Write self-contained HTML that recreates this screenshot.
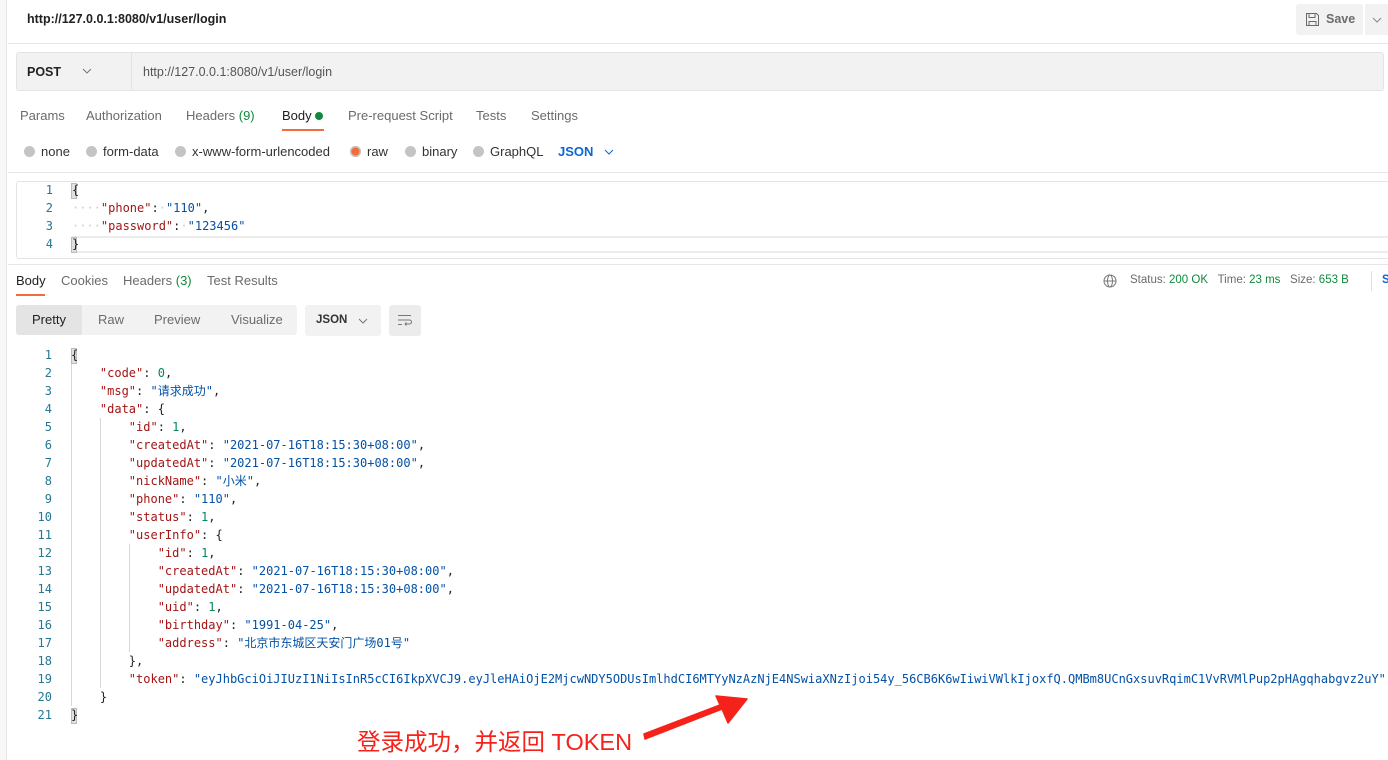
<!DOCTYPE html>
<html><head><meta charset="utf-8"><style>
*{margin:0;padding:0;box-sizing:border-box}
body{width:1388px;height:760px;overflow:hidden;background:#fff;position:relative;font-family:"Liberation Sans","Noto Sans CJK SC",sans-serif;font-size:12px;color:#6b6b6b}
.a{position:absolute;white-space:nowrap}
.strip{position:absolute;left:0;top:0;width:7px;height:760px;background:#f7f7f7;border-right:1px solid #e6e6e6}
.hr{position:absolute;left:8px;right:0;height:1px;background:#e6e6e6}
.code{font-family:"DejaVu Sans Mono","Noto Sans CJK SC",monospace;font-size:12px;line-height:18px}
.ln{position:absolute;width:40px;text-align:right;color:#237893;font-family:"DejaVu Sans Mono",monospace;font-size:12px;line-height:18px}
.k{color:#a31515}.s{color:#0451a5}.n{color:#098658}.p{color:#222}
.rad{display:inline-block;width:11px;height:11px;border-radius:50%;background:#c4c4c4;vertical-align:-1px;margin-right:6px}
.g{color:#0f8a3c}
.guide{position:absolute;width:1px;background:#d8d8d8}
.t{font-size:13px}
</style></head><body>
<div class="strip"></div>
<div class="a" style="left:27px;top:12px;font-size:12.5px;color:#212121;font-weight:bold">http://127.0.0.1:8080/v1/user/login</div>
<div class="a" style="left:1296px;top:4px;width:67px;height:31px;background:#f2f2f2;border-radius:3px"></div>
<svg class="a" style="left:1305px;top:12px" width="15" height="15" viewBox="0 0 15 15" fill="none" stroke="#6b6b6b" stroke-width="1"><path d="M1.5 1.5h10l2 2v10h-12z M4 1.5v4h6v-4 M4 13.5v-4h7v4"/></svg>
<div class="a" style="left:1326px;top:12px;font-weight:bold;color:#6b6b6b;font-size:12.5px">Save</div>
<div class="a" style="left:1365px;top:4px;width:23px;height:31px;background:#f2f2f2"></div>
<svg class="a" style="left:1372px;top:17px" width="10" height="6"><path d="M1 1l4 4 4-4" stroke="#888" fill="none"/></svg>
<div class="hr" style="top:43px"></div>

<div class="a" style="left:16px;top:52px;width:1368px;height:39px;background:#f2f2f2;border:1px solid #e4e4e4;border-radius:3px"></div>
<div class="a" style="left:131px;top:53px;width:1px;height:37px;background:#e2e2e2"></div>
<div class="a" style="left:27px;top:65px;font-weight:bold;color:#212121;font-size:12.5px">POST</div>
<svg class="a" style="left:82px;top:68px" width="10" height="6"><path d="M1 1l4 4 4-4" stroke="#777" fill="none"/></svg>
<div class="a" style="left:143px;top:65px;color:#555;font-size:12.5px">http://127.0.0.1:8080/v1/user/login</div>

<div class="a t" style="left:20px;top:108px">Params</div>
<div class="a t" style="left:86px;top:108px">Authorization</div>
<div class="a t" style="left:186px;top:108px">Headers <span class="g">(9)</span></div>
<div class="a t" style="left:282px;top:108px;color:#212121">Body <span style="display:inline-block;width:8px;height:8px;border-radius:50%;background:#0f8a3c;vertical-align:0"></span></div>
<div class="a" style="left:282px;top:129px;width:42px;height:2px;background:#f26b3a"></div>
<div class="a t" style="left:348px;top:108px">Pre-request Script</div>
<div class="a t" style="left:476px;top:108px">Tests</div>
<div class="a t" style="left:531px;top:108px">Settings</div>

<div class="a t" style="left:24px;top:144px;color:#333"><span class="rad"></span>none</div>
<div class="a t" style="left:86px;top:144px;color:#333"><span class="rad"></span>form-data</div>
<div class="a t" style="left:175px;top:144px;color:#333"><span class="rad"></span>x-www-form-urlencoded</div>
<div class="a t" style="left:350px;top:144px;color:#333"><span class="rad" style="background:#f26b3a;box-shadow:0 0 0 1.5px #c4c4c4 inset"></span>raw</div>
<div class="a t" style="left:405px;top:144px;color:#333"><span class="rad"></span>binary</div>
<div class="a t" style="left:473px;top:144px;color:#333"><span class="rad"></span>GraphQL</div>
<div class="a t" style="left:558px;top:144px;color:#0b66d6;font-weight:bold">JSON</div>
<svg class="a" style="left:604px;top:149px" width="10" height="6"><path d="M1 1l4 4 4-4" stroke="#0b66d6" fill="none"/></svg>
<div class="hr" style="top:172px"></div>

<div class="a" style="left:16px;top:181px;width:1380px;height:78px;border:1px solid #e4e4e4;border-radius:3px"></div>
<div class="a" style="left:72px;top:236px;width:1316px;height:17px;border-top:2px solid #ececec;border-bottom:2px solid #ececec"></div>
<div class="ln" style="left:13px;top:181px">1<br>2<br>3<br>4</div>
<div class="a" style="left:71px;top:183px;width:6px;height:16px;background:#e0e0e0;border:1px solid #bbb"></div>
<div class="a" style="left:71px;top:237px;width:6px;height:16px;background:#e0e0e0;border:1px solid #bbb"></div>
<div class="a code p" style="left:72px;top:181px">{<br><span style="color:#ccc">····</span><span class="k">"phone"</span>:<span style="color:#ccc">·</span><span class="s">"110"</span>,<br><span style="color:#ccc">····</span><span class="k">"password"</span>:<span style="color:#ccc">·</span><span class="s">"123456"</span><br>}</div>
<div class="hr" style="top:264px"></div>

<div class="a t" style="left:16px;top:273px;color:#212121">Body</div>
<div class="a" style="left:16px;top:294px;width:29px;height:2px;background:#f26b3a"></div>
<div class="a t" style="left:61px;top:273px">Cookies</div>
<div class="a t" style="left:123px;top:273px">Headers <span class="g">(3)</span></div>
<div class="a t" style="left:207px;top:273px">Test Results</div>
<svg class="a" style="left:1103px;top:274px" width="14" height="14" viewBox="0 0 14 14" fill="none" stroke="#777"><circle cx="7" cy="7" r="6"/><ellipse cx="7" cy="7" rx="2.5" ry="6"/><path d="M1 7h12"/></svg>
<div class="a" style="left:1130px;top:274px;font-size:11.5px">Status: <span class="g">200 OK</span>&nbsp;&nbsp;&nbsp;Time: <span class="g">23 ms</span>&nbsp;&nbsp;&nbsp;Size: <span class="g">653 B</span></div>
<div class="a" style="left:1371px;top:271px;width:1px;height:20px;background:#e0e0e0"></div>
<div class="a" style="left:1382px;top:274px;color:#0b66d6;font-weight:bold;font-size:11.5px">S</div>

<div class="a" style="left:16px;top:305px;width:281px;height:30px;background:#f2f2f2;border-radius:3px"></div>
<div class="a" style="left:16px;top:305px;width:66px;height:30px;background:#e4e4e4;border-radius:3px 0 0 3px"></div>
<div class="a t" style="left:32px;top:312px;color:#212121">Pretty</div>
<div class="a t" style="left:98px;top:312px">Raw</div>
<div class="a t" style="left:154px;top:312px">Preview</div>
<div class="a t" style="left:231px;top:312px">Visualize</div>
<div class="a" style="left:305px;top:305px;width:76px;height:31px;background:#f2f2f2;border-radius:3px"></div>
<div class="a" style="left:316px;top:314px;color:#333;font-weight:bold;font-size:11.5px">JSON</div>
<svg class="a" style="left:358px;top:318px" width="10" height="6"><path d="M1 1l4 4 4-4" stroke="#777" fill="none"/></svg>
<div class="a" style="left:389px;top:305px;width:32px;height:31px;background:#ececec;border-radius:3px"></div>
<svg class="a" style="left:397px;top:313px" width="16" height="14" viewBox="0 0 16 14" fill="none" stroke="#777"><path d="M1 2.5h13M1 7h11.5a2 2 0 010 4H8M9.5 9.5L8 11l1.5 1.5M1 11.5h4"/></svg>

<div class="ln" style="left:12px;top:346px">1<br>2<br>3<br>4<br>5<br>6<br>7<br>8<br>9<br>10<br>11<br>12<br>13<br>14<br>15<br>16<br>17<br>18<br>19<br>20<br>21</div>
<div class="guide" style="left:71px;top:364px;height:342px"></div>
<div class="guide" style="left:100px;top:418px;height:270px"></div>
<div class="guide" style="left:129px;top:544px;height:108px"></div>
<div class="a" style="left:71px;top:348px;width:6px;height:16px;background:#e0e0e0;border:1px solid #bbb"></div>
<div class="a" style="left:71px;top:708px;width:6px;height:16px;background:#e0e0e0;border:1px solid #bbb"></div>
<div class="a code p" style="left:71px;top:346px;white-space:pre">{
    <span class="k">"code"</span>: <span class="n">0</span>,
    <span class="k">"msg"</span>: <span class="s">"请求成功"</span>,
    <span class="k">"data"</span>: {
        <span class="k">"id"</span>: <span class="n">1</span>,
        <span class="k">"createdAt"</span>: <span class="s">"2021-07-16T18:15:30+08:00"</span>,
        <span class="k">"updatedAt"</span>: <span class="s">"2021-07-16T18:15:30+08:00"</span>,
        <span class="k">"nickName"</span>: <span class="s">"小米"</span>,
        <span class="k">"phone"</span>: <span class="s">"110"</span>,
        <span class="k">"status"</span>: <span class="n">1</span>,
        <span class="k">"userInfo"</span>: {
            <span class="k">"id"</span>: <span class="n">1</span>,
            <span class="k">"createdAt"</span>: <span class="s">"2021-07-16T18:15:30+08:00"</span>,
            <span class="k">"updatedAt"</span>: <span class="s">"2021-07-16T18:15:30+08:00"</span>,
            <span class="k">"uid"</span>: <span class="n">1</span>,
            <span class="k">"birthday"</span>: <span class="s">"1991-04-25"</span>,
            <span class="k">"address"</span>: <span class="s">"北京市东城区天安门广场01号"</span>
        },
        <span class="k">"token"</span>: <span class="s">"eyJhbGciOiJIUzI1NiIsInR5cCI6IkpXVCJ9.eyJleHAiOjE2MjcwNDY5ODUsImlhdCI6MTYyNzAzNjE4NSwiaXNzIjoi54y_56CB6K6wIiwiVWlkIjoxfQ.QMBm8UCnGxsuvRqimC1VvRVMlPup2pHAgqhabgvz2uY"</span>
    }
}</div>

<div class="a" style="left:357px;top:723px;color:#f5221b;font-size:23.5px;font-family:'Liberation Sans','Noto Sans CJK SC',sans-serif">登录成功，并返回 TOKEN</div>
<svg class="a" style="left:640px;top:690px" width="112" height="56" viewBox="640 690 112 56"><path d="M645 739 L722 709 L728 723 L747 699 L716 696 L720 705 L644 734 Z" fill="#f5221b" stroke="#f5221b" stroke-linejoin="round" stroke-width="1.5"/></svg>
</body></html>
